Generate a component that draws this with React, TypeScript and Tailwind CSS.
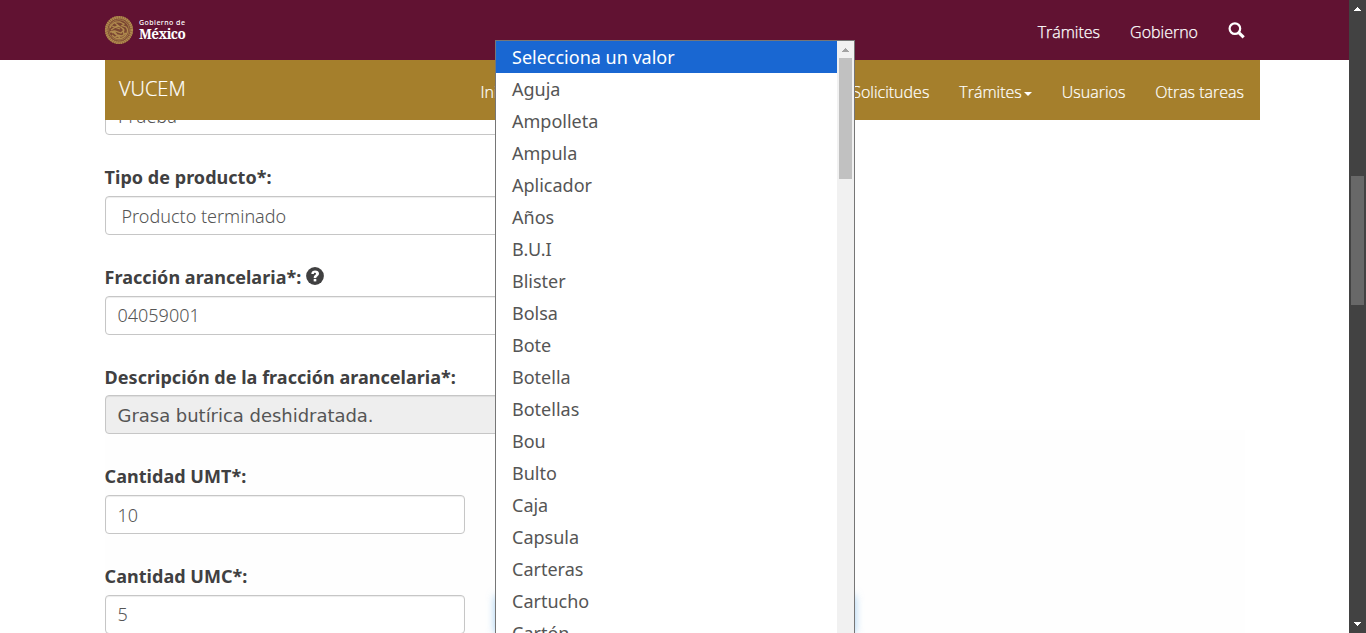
import { type ReactNode } from 'react';

const options = [
  'Aguja', 'Ampolleta', 'Ampula', 'Aplicador', 'Años', 'B.U.I', 'Blister', 'Bolsa', 'Bote',
  'Botella', 'Botellas', 'Bou', 'Bulto', 'Caja', 'Capsula', 'Carteras', 'Cartucho', 'Cartón',
];

const control =
  'flex h-[39px] items-center rounded-[4px] border border-[#c6c6c6] shadow-[inset_0_1px_1px_rgba(0,0,0,0.075)]';

function Label({ children }: { children: ReactNode }) {
  return (
    <div className="-ml-[0.400px] flex h-[61px] items-start pt-[30px] text-[18px] leading-[25px] font-bold tracking-[0.03px] text-[#404041]">
      {children}
    </div>
  );
}

function Seal() {
  return (
    <svg width="30" height="30" viewBox="0 0 30 30" fill="none" stroke="#b08a4e">
      <circle cx="15" cy="15" r="14" fill="#7a4632" stroke="none" />
      <circle cx="15" cy="15" r="12.7" strokeWidth="2.800" strokeDasharray="1.7 .4" />
      <circle cx="15" cy="15" r="10.3" strokeWidth=".7" />
      <path
        d="M6 13c1-4 5-7 10-6l4 2-2 1.500 4 1.500c2 2 2 5 0 8M7 15l6-4 4 1 3 3-3 3-6-2-3 2M6 17l4-1 3 4 5 1 4-3M8 11l8 3M11 8l5 4M8 20c4 5 10 5 14 0M11 22l3-1h3l3-1M9 17l7 6M19 13l1 7"
        strokeWidth="1.3"
      />
    </svg>
  );
}

function SearchIcon() {
  return (
    <svg width="17" height="17" viewBox="0 0 17 17" fill="none" stroke="white">
      <circle cx="6.900" cy="6.600" r="5.300" strokeWidth="2.200" />
      <path d="M10.800 10.700L15.700 15.400" strokeWidth="3.100" />
    </svg>
  );
}

function HelpIcon() {
  return (
    <svg className="mt-[2px] ml-[5px]" width="18" height="18" viewBox="0 0 18 18">
      <circle cx="9" cy="9" r="8.900" fill="#404041" />
      <path d="M5.300 6.900C5.500 4.400 7 3.500 9.100 3.500c2.300 0 3.900 1.200 3.900 3.100 0 1.500-.9 2.200-1.700 2.800-.7.500-1 .8-1 1.600H7.700c0-1.900.6-2.500 1.400-3.100.6-.4.900-.7.900-1.200 0-.6-.4-.9-1-.9-.8 0-1.100.4-1.200 1.100z" fill="white" />
      <path d="M7.700 11.900H10.300V14.400H7.700z" fill="white" />
    </svg>
  );
}

export default function App() {
  return (
    <div className="relative flex h-[633px] w-full overflow-hidden bg-white font-['Noto_Sans',sans-serif]">
      <div className="flex min-w-0 flex-1 flex-col">
        <header className="flex h-[60px] shrink-0 items-center justify-between bg-[#611232] pr-[104px] pl-[104px]">
          <div className="flex items-center gap-[5px] pb-px">
            <Seal />
            <div className="flex flex-col text-white">
              <span className="h-[8px] text-[7px] leading-[6px] font-medium tracking-[0.450px]">Gobierno de</span>
              <span className="font-['Noto_Serif','Liberation_Serif',serif] text-[13.500px] leading-[12px] font-bold tracking-[-0.550px]">México</span>
            </div>
          </div>
          <nav className="flex items-center gap-[30px] pt-[4px] font-['Open_Sans',sans-serif] text-[16px] font-light text-white [-webkit-text-stroke:0.250px_white]">
            <span>Trámites</span>
            <span>Gobierno</span>
            <span className="-mt-[3px]"><SearchIcon /></span>
          </nav>
        </header>

        <div className="z-10 ml-[105px] flex h-[60px] w-[1155px] shrink-0 items-center justify-between bg-[#a57f2c] pr-[16px] pl-[14px] font-['Open_Sans',sans-serif] font-light text-white [-webkit-text-stroke:0.200px_white]">
          <span className="pb-[2px] text-[20px]">VUCEM</span>
          <nav className="flex items-center gap-[30px] pt-[4px] text-[16px]">
            <span className="mr-[304px]">Inicio</span>
            <span>Solicitudes</span>
            <span className="flex items-center">
              Trámites
              <svg className="mt-[3px] ml-[2px]" width="8" height="4" viewBox="0 0 8 4">
                <path d="M0 0H8L4 4z" fill="white" />
              </svg>
            </span>
            <span>Usuarios</span>
            <span>Otras tareas</span>
          </nav>
        </div>

        <main className="-mt-[24px] ml-[105px] w-[1140px] text-[18px] text-[#555]">
          <div className={`${control} w-[750px] pt-px pl-[12px] font-light`}>Prueba</div>
          <Label>Tipo de producto*:</Label>
          <div className={`${control} w-[750px] pt-px pl-[15.500px] font-light`}>Producto terminado</div>
          <Label>Fracción arancelaria*:<HelpIcon /></Label>
          <div className={`${control} w-[750px] pl-[11.500px] font-light`}>04059001</div>
          <Label>Descripción de la fracción arancelaria*:</Label>
          <div className={`${control} relative -mt-px w-[750px] bg-[#eee] pt-[2px] pl-[11.500px] font-['DejaVu_Sans',sans-serif] tracking-[-0.030px]`}>
            Grasa butírica deshidratada.
          </div>
          <section className="-mt-[4px] bg-[#fefefe] pt-[4px]">
            <Label>Cantidad UMT*:</Label>
            <div className={`${control} w-[360px] bg-white pt-px pl-[11.500px] font-light`}>10</div>
            <Label>Cantidad UMC*:</Label>
            <div className="flex gap-[30px]">
              <div className={`${control} w-[360px] bg-white pl-[11.500px] font-light`}>5</div>
              <div className="h-[39px] w-[360px] rounded-[4px] border border-[#66afe9] bg-white shadow-[0_0_8px_rgba(102,175,233,0.6)]" />
            </div>
          </section>
        </main>
      </div>

      <aside className="flex w-[17px] shrink-0 flex-col items-center bg-[#424242]">
        <svg className="mt-[7px] shrink-0" width="7" height="4" viewBox="0 0 7 4" shapeRendering="crispEdges">
          <path d="M0 4H7L3.500 0z" fill="white" />
        </svg>
        <div className="mt-[165px] h-[129px] w-[13px] bg-[#686868]" />
        <svg className="mt-auto mb-[7px]" width="7" height="4" viewBox="0 0 7 4" shapeRendering="crispEdges">
          <path d="M0 0H7L3.500 4z" fill="white" />
        </svg>
      </aside>

      <div className="absolute top-[40px] left-[495px] z-20 flex h-[600px] w-[360px] border border-[#767676] bg-white">
        <div className="flex-1 text-[18px] leading-[32px] text-[#555]">
          <div className="h-[32px] bg-[#1967d2] pl-[16px] text-white">Selecciona un valor</div>
          {options.map((o) => (
            <div key={o} className="h-[32px] pl-[16px]">{o}</div>
          ))}
        </div>
        <div className="flex w-[17px] flex-col items-center bg-[#f1f1f1]">
          <svg className="mt-[7px]" width="7" height="4" viewBox="0 0 7 4" shapeRendering="crispEdges">
            <path d="M0 4H7L3.500 0z" fill="#a3a3a3" />
          </svg>
          <div className="mt-[6px] h-[121px] w-[13px] bg-[#c1c1c1]" />
        </div>
      </div>
    </div>
  );
}
